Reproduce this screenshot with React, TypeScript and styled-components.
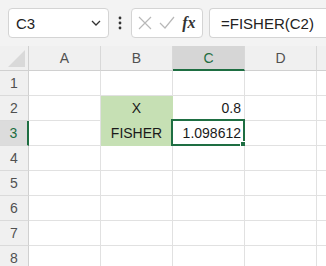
import React from "react";
import styled, { createGlobalStyle, css } from "styled-components";

const Global = createGlobalStyle`
  html, body { margin: 0; padding: 0; background: #ffffff; overflow: hidden; }
  body { font-family: "Liberation Sans", Arial, sans-serif; }
  #root { width: 326px; height: 266px; overflow: hidden; }
`;

const Page = styled.div`
  width: 326px;
  height: 266px;
  overflow: hidden;
  display: flex;
  flex-direction: column;
`;

const Toolbar = styled.div`
  height: 46px;
  flex: 0 0 46px;
  box-sizing: border-box;
  padding: 8px 0 8px 8px;
  background: #f3f3f3;
  display: flex;
  align-items: stretch;
`;

const Box = styled.div`
  box-sizing: border-box;
  background: #ffffff;
  border: 1px solid #d4d4d4;
  border-radius: 4px;
  display: flex;
  align-items: center;
`;

const NameBox = styled(Box)`
  width: 101px;
  flex: 0 0 101px;
  padding: 0 6px 0 7px;
  justify-content: space-between;
  font-size: 15px;
  color: #222;
`;

const Kebab = styled.div`
  width: 22px;
  flex: 0 0 22px;
  display: flex;
  align-items: center;
  justify-content: center;
`;

const FormulaButtons = styled(Box)`
  width: 72px;
  flex: 0 0 72px;
  justify-content: space-around;
  padding: 0 3px;
`;

const Fx = styled.span`
  font-family: "Liberation Serif", "Times New Roman", serif;
  font-style: italic;
  font-weight: bold;
  font-size: 16px;
  color: #333;
`;

const FormulaInput = styled(Box)`
  margin-left: 6px;
  width: 140px;
  flex: 0 0 140px;
  padding-left: 11px;
  font-size: 15px;
  color: #222;
  border-right: none;
  border-radius: 4px 0 0 4px;
`;

const Grid = styled.div`
  display: grid;
  grid-template-columns: 29px repeat(5, 72px);
  grid-auto-rows: 25px;
`;

const Cell = styled.div<{ $fill?: boolean; $align?: "left" | "center" | "right" }>`
  position: relative;
  box-sizing: border-box;
  border-right: 1px solid #e1e1e1;
  border-bottom: 1px solid #e1e1e1;
  font-size: 14px;
  color: #1a1a1a;
  display: flex;
  align-items: center;
  padding: 0 3px;
  justify-content: ${(p) =>
    p.$align === "center" ? "center" : p.$align === "right" ? "flex-end" : "flex-start"};
  background: ${(p) => (p.$fill ? "#c6e0b4" : "#ffffff")};
  ${(p) =>
    p.$fill &&
    css`
      border-right-color: #c6e0b4;
      border-bottom-color: #c6e0b4;
    `}
`;

const ColHeader = styled.div<{ $active?: boolean }>`
  box-sizing: border-box;
  background: ${(p) => (p.$active ? "#d6d6d6" : "#f0f0f0")};
  border-right: 1px solid #d8d8d8;
  border-bottom: ${(p) => (p.$active ? "2px solid #1e6e42" : "1px solid #d0d0d0")};
  display: flex;
  align-items: center;
  justify-content: center;
  padding-top: ${(p) => (p.$active ? "1px" : "0")};
  font-size: 14px;
  color: ${(p) => (p.$active ? "#1e6e42" : "#505050")};
`;

const Corner = styled.div`
  position: relative;
  box-sizing: border-box;
  background: #f0f0f0;
  border-right: 1px solid #d0d0d0;
  border-bottom: 1px solid #d0d0d0;
`;

const CornerTriangle = styled.div`
  position: absolute;
  right: 3px;
  bottom: 3px;
  width: 0;
  height: 0;
  border-left: 17px solid transparent;
  border-bottom: 17px solid #d9d9d9;
`;

const RowHeader = styled.div<{ $active?: boolean }>`
  box-sizing: border-box;
  background: ${(p) => (p.$active ? "#dcdcdc" : "#f0f0f0")};
  border-right: ${(p) => (p.$active ? "2px solid #1e6e42" : "1px solid #d0d0d0")};
  border-bottom: 1px solid #dadada;
  display: flex;
  align-items: center;
  justify-content: center;
  font-size: 14px;
  color: ${(p) => (p.$active ? "#1e6e42" : "#505050")};
`;

const Selection = styled.div`
  position: absolute;
  left: -2px;
  top: -2px;
  right: -1px;
  bottom: -1px;
  border: 2px solid #1e6e42;
  pointer-events: none;
`;

const Handle = styled.div`
  position: absolute;
  right: -4px;
  bottom: -4px;
  width: 5px;
  height: 5px;
  background: #1e6e42;
  border: 1px solid #ffffff;
`;

const Chevron = () => (
  <svg width="12" height="12" viewBox="0 0 12 12">
    <path d="M2 4 L6 8 L10 4" fill="none" stroke="#333" strokeWidth="1.3" />
  </svg>
);

const Dots = () => (
  <svg width="4" height="14" viewBox="0 0 4 14">
    <circle cx="2" cy="2" r="1.4" fill="#333" />
    <circle cx="2" cy="7" r="1.4" fill="#333" />
    <circle cx="2" cy="12" r="1.4" fill="#333" />
  </svg>
);

const Cross = () => (
  <svg width="14" height="14" viewBox="0 0 14 14">
    <path d="M1 1 L13 13 M13 1 L1 13" stroke="#b8b8b8" strokeWidth="1.2" fill="none" />
  </svg>
);

const Check = () => (
  <svg width="16" height="14" viewBox="0 0 16 14">
    <path d="M1 7 L6 12 L15 1" stroke="#b8b8b8" strokeWidth="1.2" fill="none" />
  </svg>
);

const columns = ["A", "B", "C", "D", ""];
const rows = [1, 2, 3, 4, 5, 6, 7, 8];

const data: Record<string, { text: string; align: "left" | "center" | "right"; fill?: boolean }> = {
  B2: { text: "X", align: "center", fill: true },
  B3: { text: "FISHER", align: "center", fill: true },
  C2: { text: "0.8", align: "right" },
  C3: { text: "1.098612", align: "right" },
};

export default function App() {
  return (
    <Page>
      <Global />
      <Toolbar>
        <NameBox>
          <span>C3</span>
          <Chevron />
        </NameBox>
        <Kebab>
          <Dots />
        </Kebab>
        <FormulaButtons>
          <Cross />
          <Check />
          <Fx>fx</Fx>
        </FormulaButtons>
        <FormulaInput>=FISHER(C2)</FormulaInput>
      </Toolbar>
      <Grid>
        <Corner>
          <CornerTriangle />
        </Corner>
        {columns.map((c, i) => (
          <ColHeader key={i} $active={c === "C"}>
            {c}
          </ColHeader>
        ))}
        {rows.map((r) => (
          <React.Fragment key={r}>
            <RowHeader $active={r === 3}>{r}</RowHeader>
            {columns.map((c, i) => {
              const id = `${c}${r}`;
              const d = data[id];
              return (
                <Cell key={i} $fill={d?.fill} $align={d?.align}>
                  {d?.text}
                  {id === "C3" && (
                    <Selection>
                      <Handle />
                    </Selection>
                  )}
                </Cell>
              );
            })}
          </React.Fragment>
        ))}
      </Grid>
    </Page>
  );
}
